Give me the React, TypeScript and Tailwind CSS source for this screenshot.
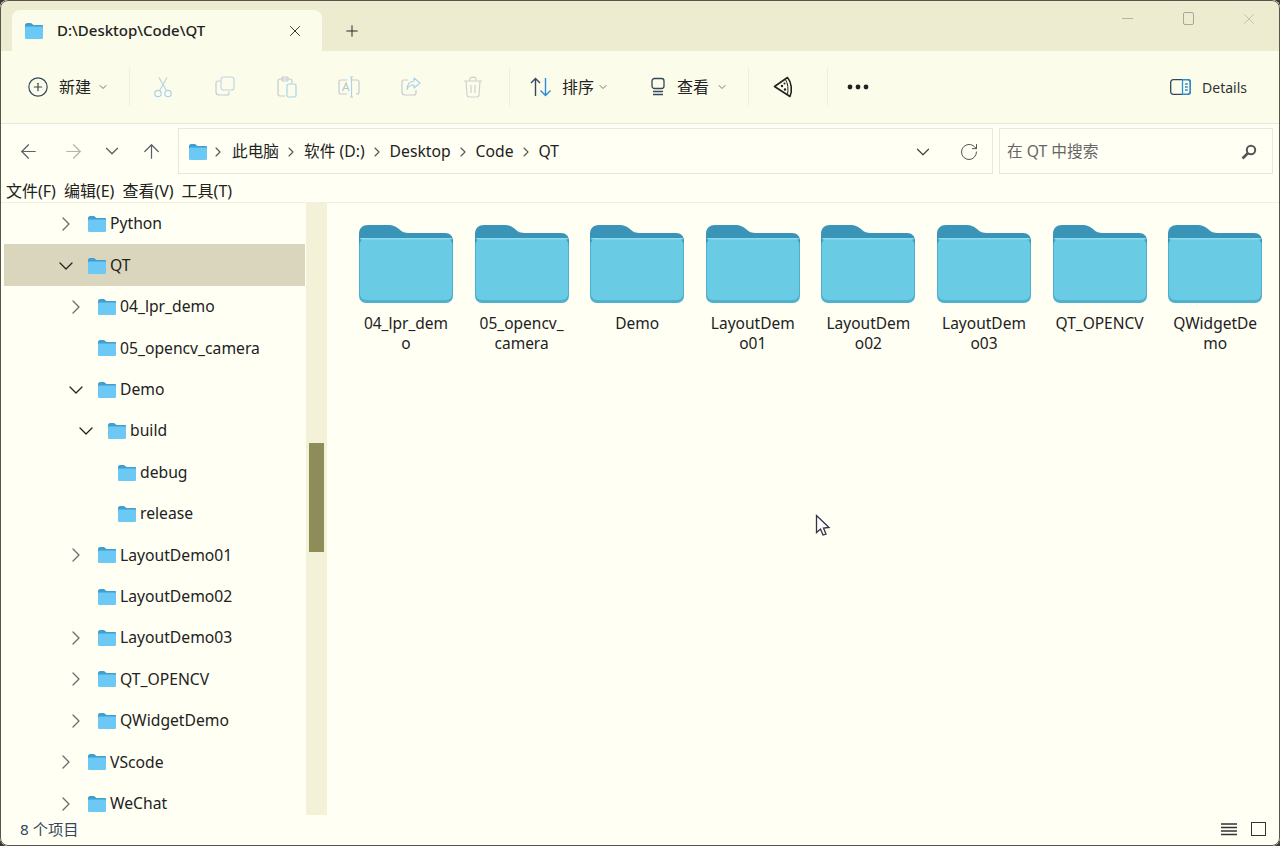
import React from "react";
import { ArrowLeft, ArrowRight, ArrowUp, ChevronDown, ChevronRight, Plus, PlusCircle, RotateCw, X } from "lucide-react";

const FONT = "font-['Noto_Sans','Noto_Sans_CJK_SC',sans-serif]";

// small folder icon used in tab, address bar and tree
const SmallFolder = ({ className = "" }: { className?: string }) => (
  <svg viewBox="0 0 20 18" className={className}>
    <path d="M1 3C1 2 2 1 3 1h4l2.500 2H18c.6 0 1 .4 1 1v3H1z" fill="#3f9fd0" />
    <rect x="1" y="4.500" width="18" height="12.500" rx="1.200" fill="#6cc8f5" />
  </svg>
);

const BigFolder = () => (
  <svg viewBox="0 0 94 78" className="w-[94px] h-[78px]">
    <path
      d="M0 9C0 3 4 0 9 0h20c5 0 7 1 11 4 3 3 6 4 10 4h36c5 0 8 3 8 8v14H0z"
      fill="#3a94b8"
    />
    <rect x="0" y="13" width="94" height="65" rx="7" fill="#4fb0cc" />
    <rect x="1" y="13" width="92" height="62" rx="6" fill="#69cbe4" />
    <rect x="1" y="13" width="92" height="1.500" rx="0.700" fill="#8adcf0" />
  </svg>
);

const Sep = () => <div className="w-px h-[38px] bg-[#f1efdc] shrink-0" />;

const Dim = ({ children }: { children: React.ReactNode }) => (
  <div className="w-[62px] flex justify-center">{children}</div>
);

const DIM_GRAY = "#c5ccd2";
const DIM_BLUE = "#a8d2ee";

const CutIcon = () => (
  <svg viewBox="0 0 20 22" className="w-[20px] h-[22px]" fill="none" stroke={DIM_BLUE} strokeWidth="1.200">
    <circle cx="5" cy="17.500" r="3.200" />
    <circle cx="15" cy="17.500" r="3.200" />
    <path d="M6.500 14.700 14 1.500M13.500 14.700 6 1.500" stroke="#bcd2e2" />
  </svg>
);

const CopyIcon = () => (
  <svg viewBox="0 0 20 20" className="w-[20px] h-[20px]" fill="none" strokeWidth="1.200">
    <path d="M5 5H3c-1.300 0-2 .8-2 2v9c0 1.700 1 3 3 3h8c1.300 0 2-.8 2-2v-1.500" stroke={DIM_GRAY} />
    <rect x="6" y="1" width="13" height="13" rx="2.500" stroke="#bcd6ea" />
  </svg>
);

const PasteIcon = () => (
  <svg viewBox="0 0 20 22" className="w-[20px] h-[22px]" fill="none" strokeWidth="1.200">
    <path d="M8 20H3c-1.200 0-2-.8-2-2V5c0-1.200.8-2 2-2h10c1.200 0 2 .8 2 2v2" stroke={DIM_GRAY} />
    <rect x="5" y="1" width="6" height="4" rx="1" stroke={DIM_GRAY} />
    <rect x="10" y="8" width="9" height="13" rx="1.500" stroke={DIM_BLUE} />
  </svg>
);

const RenameIcon = () => (
  <svg viewBox="0 0 22 22" className="w-[22px] h-[22px]" fill="none" strokeWidth="1.200">
    <path d="M13 4h6c1.300 0 2 .8 2 2v10c0 1.300-.7 2-2 2h-1M9 18H3c-1.300 0-2-.7-2-2V6c0-1.300.7-2 2-2h6" stroke={DIM_GRAY} />
    <path d="M4.500 15 8 7l3 8M5.500 12.500h5" stroke="#b4c7d6" />
    <path d="M12 1h3M12 21h3M13.500 1v20" stroke={DIM_BLUE} />
  </svg>
);

const ShareIcon = () => (
  <svg viewBox="0 0 20 20" className="w-[20px] h-[20px]" fill="none" strokeWidth="1.200">
    <path d="M7 4H3C1.800 4 1 4.800 1 6v10c0 1.600 1 3 3 3h9c1.300 0 2-.8 2-2v-3" stroke={DIM_GRAY} />
    <path d="M13 2l6 5-6 5V9c-3.500 0-6 1.500-7 4.500C6 8.500 9 5.500 13 5z" stroke={DIM_BLUE} strokeLinejoin="round" />
  </svg>
);

const TrashIcon = () => (
  <svg viewBox="0 0 20 22" className="w-[20px] h-[22px]" fill="none" stroke="#cfd0ce" strokeWidth="1.200">
    <path d="M1 5h18M7 5V3c0-1 .6-1.700 1.500-1.700h3c.9 0 1.500.7 1.500 1.700v2" />
    <path d="M3 5l1 14c.1 1 .8 2 2 2h8c1.200 0 1.900-1 2-2l1-14" />
    <path d="M8 9v8M12 9v8" />
  </svg>
);

const Toolbar = () => (
  <div className="h-[73px] flex items-center pl-[27px] pr-[33px] border-b border-[#e9e7d2] bg-[#fcfceb] text-[#222] shrink-0">
    <div className="flex items-center w-[102px] shrink-0">
      <PlusCircle size={22} strokeWidth={1.300} className="text-[#33485a]" />
      <span className="ml-[10px] text-[16px]">新建</span>
      <ChevronDown size={12} className="ml-[6px] text-[#777]" />
    </div>
    <Sep />
    <div className="flex w-[372px] ml-[2px] shrink-0">
      <Dim><CutIcon /></Dim>
      <Dim><CopyIcon /></Dim>
      <Dim><PasteIcon /></Dim>
      <Dim><RenameIcon /></Dim>
      <Dim><ShareIcon /></Dim>
      <Dim><TrashIcon /></Dim>
    </div>
    <div className="ml-[5px]"><Sep /></div>
    <div className="flex items-center w-[120px] ml-[20px] shrink-0">
      <svg viewBox="0 0 22 20" className="w-[22px] h-[20px]" fill="none" strokeWidth="1.400">
        <path d="M5.500 19V1.500M1 6l4.500-4.500L10 6" stroke="#33485a" />
        <path d="M15.500 1v17.500M10.500 13.500l5 5 5-5" stroke="#2a8fd8" />
      </svg>
      <span className="ml-[10px] text-[16px]">排序</span>
      <ChevronDown size={12} className="ml-[3px] text-[#777]" />
    </div>
    <div className="flex items-center w-[98px] shrink-0">
      <svg viewBox="0 0 16 20" className="w-[16px] h-[20px]" fill="none" stroke="#33485a" strokeWidth="1.300">
        <rect x="2" y="1.500" width="12" height="10" rx="2.500" />
        <path d="M3 14.500h10M3 17.500h10" />
      </svg>
      <span className="ml-[11px] text-[16px]">查看</span>
      <ChevronDown size={12} className="ml-[7px] text-[#777]" />
    </div>
    <Sep />
    <div className="w-[78px] pl-[24px] shrink-0">
      <svg viewBox="0 0 20 22" className="w-[20px] h-[22px]" fill="none" stroke="#222" strokeWidth="1.600">
        <path d="M1.500 10.500 14.500 1.500C18.500 6 19.500 15 17 20.500z" strokeLinejoin="round" />
        <path d="M12.500 3.500c2.500 4 3 10 2 15" strokeWidth="1" />
        <circle cx="9" cy="10" r="1.200" fill="#222" stroke="none" />
        <circle cx="12" cy="13.500" r="1.200" fill="#222" stroke="none" />
        <circle cx="11.500" cy="7.500" r="1" fill="#222" stroke="none" />
      </svg>
    </div>
    <Sep />
    <svg viewBox="0 0 22 6" className="ml-[19px] w-[22px] h-[6px]" fill="#222">
      <circle cx="3" cy="3" r="2.400" />
      <circle cx="11" cy="3" r="2.400" />
      <circle cx="19" cy="3" r="2.400" />
    </svg>
    <div className="ml-auto flex items-center">
      <svg viewBox="0 0 21 16" className="w-[21px] h-[16px]" fill="none" strokeWidth="1.300">
        <rect x="0.700" y="0.700" width="19.600" height="14.600" rx="2.500" stroke="#33485a" />
        <path d="M12.500 .7h5.300c1.500 0 2.500 1 2.500 2.500v9.600c0 1.500-1 2.500-2.500 2.500h-5.300z" stroke="#2a8fd8" />
        <path d="M15 5h2.800M15 8h2.800M15 11h2.800" stroke="#2a8fd8" />
      </svg>
      <span className="ml-[11px] text-[14px] text-[#333]">Details</span>
    </div>
  </div>
);

const Crumb = ({ label }: { label: string }) => (
  <>
    <ChevronRight size={16} strokeWidth={1.600} className="ml-[4px] text-[#555]" />
    <span className="ml-[5px]">{label}</span>
  </>
);

const AddressBar = () => (
  <div className="h-[54px] flex items-center text-[#222] shrink-0">
    <div className="w-[178px] flex items-center pl-[17px] text-[#5c6165] shrink-0">
      <ArrowLeft size={23} strokeWidth={1.300} />
      <ArrowRight size={23} strokeWidth={1.300} className="ml-[22px] text-[#b4b6ae]" />
      <ChevronDown size={22} strokeWidth={1.400} className="ml-[16px]" />
      <ArrowUp size={23} strokeWidth={1.300} className="ml-[17px]" />
    </div>
    <div className="w-[815px] h-[46px] pt-[1px] border border-[#e9e8dc] flex items-center pl-[9px] text-[15.700px] shrink-0">
      <SmallFolder className="w-[20px] h-[18px]" />
      <ChevronRight size={16} strokeWidth={1.600} className="ml-[2px] text-[#555]" />
      <span className="ml-[6px]">此电脑</span>
      <Crumb label="软件 (D:)" />
      <Crumb label="Desktop" />
      <Crumb label="Code" />
      <Crumb label="QT" />
      <ChevronDown size={22} strokeWidth={1.300} className="ml-auto mr-[25px] text-[#444]" />
      <RotateCw size={20} strokeWidth={1.200} className="mr-[13px] text-[#555]" />
    </div>
    <div className="ml-[6px] w-[274px] h-[46px] pt-[1px] border border-[#e9e8dc] flex items-center pl-[7px] pr-[15px] text-[15.700px] text-[#666] shrink-0">
      <span>在 QT 中搜索</span>
      <svg viewBox="0 0 16 16" className="ml-auto w-[16px] h-[16px]" fill="none" stroke="#555">
        <circle cx="10" cy="6" r="4.200" strokeWidth="2" />
        <path d="M7 9 1.500 14.500" strokeWidth="2.600" />
      </svg>
    </div>
  </div>
);

type Node = { label: string; depth: number; arrow?: "right" | "down"; selected?: boolean };

const TREE: Node[] = [
  { label: "Python", depth: 0, arrow: "right" },
  { label: "QT", depth: 0, arrow: "down", selected: true },
  { label: "04_lpr_demo", depth: 1, arrow: "right" },
  { label: "05_opencv_camera", depth: 1 },
  { label: "Demo", depth: 1, arrow: "down" },
  { label: "build", depth: 2, arrow: "down" },
  { label: "debug", depth: 3 },
  { label: "release", depth: 3 },
  { label: "LayoutDemo01", depth: 1, arrow: "right" },
  { label: "LayoutDemo02", depth: 1 },
  { label: "LayoutDemo03", depth: 1, arrow: "right" },
  { label: "QT_OPENCV", depth: 1, arrow: "right" },
  { label: "QWidgetDemo", depth: 1, arrow: "right" },
  { label: "VScode", depth: 0, arrow: "right" },
  { label: "WeChat", depth: 0, arrow: "right" },
];

const INDENT = ["pl-[55px]", "pl-[65px]", "pl-[75px]", "pl-[85px]"];

const TreeRow = ({ node }: { node: Node }) => (
  <div
    className={`h-[41.400px] flex items-center shrink-0 pt-[1px] ${INDENT[node.depth]} ${
      node.selected ? "bg-[#dad6bd]" : ""
    }`}
  >
    <div className="w-[13px] flex justify-center">
      {node.arrow === "right" && <ChevronRight size={24} strokeWidth={1.300} className="shrink-0 text-[#6c6c6c]" />}
      {node.arrow === "down" && <ChevronDown size={24} strokeWidth={1.300} className="shrink-0 text-[#222]" />}
    </div>
    <SmallFolder className="ml-[15px] w-[20px] h-[18px]" />
    <span className="ml-[3px] text-[15.700px] text-[#222]">{node.label}</span>
  </div>
);

const Sidebar = () => (
  <div className="w-[329px] flex shrink-0 min-h-0">
    <div className="w-[301px] ml-[4px] flex flex-col overflow-hidden">
      {TREE.map((n) => (
        <TreeRow key={n.label} node={n} />
      ))}
    </div>
    <div className="w-[21px] ml-[1px] bg-[#f3f1d8] pt-[240px] px-[3px]">
      <div className="w-full h-[109px] bg-[#8e8c59]" />
    </div>
  </div>
);

const ITEMS = [
  ["04_lpr_dem", "o"],
  ["05_opencv_", "camera"],
  ["Demo"],
  ["LayoutDem", "o01"],
  ["LayoutDem", "o02"],
  ["LayoutDem", "o03"],
  ["QT_OPENCV"],
  ["QWidgetDe", "mo"],
];

const FileGrid = () => (
  <div className="flex-1 flex pt-[22px] pl-[19px] relative overflow-hidden">
    {ITEMS.map((lines, i) => (
      <div key={i} className="w-[115.600px] shrink-0 flex flex-col items-center">
        <div className="self-start ml-[11px]">
          <BigFolder />
        </div>
        <div className="mt-[10px] self-start w-[116px] text-center text-[15.500px] leading-[20px] text-[#222]">
          {lines.map((l) => (
            <div key={l}>{l}</div>
          ))}
        </div>
      </div>
    ))}
    {/* mouse pointer */}
    <svg viewBox="0 0 16 24" className="absolute left-[486px] top-[311px] w-[16px] h-[24px]">
      <path
        d="M1.500 1.500v17l4-3.500 2.500 6 3-1-2.500-6 5.500-.500z"
        fill="#fff"
        stroke="#334"
        strokeWidth="1.300"
      />
    </svg>
  </div>
);

export default function App() {
  return (
    <div className={`w-[1280px] h-[846px] overflow-hidden bg-[#3a3a34] ${FONT}`}>
      <div className="w-full h-full rounded-[8px] overflow-hidden bg-[#fffff4] flex flex-col relative">
        {/* title bar with tab */}
        <div className="h-[51px] bg-[#eeecd0] flex items-end pl-[12px] shrink-0">
          <div className="w-[310px] h-[41px] bg-[#fcfceb] rounded-t-[8px] flex items-center pl-[12px] pr-[18px]">
            <SmallFolder className="w-[20px] h-[18px]" />
            <span className="ml-[13px] text-[15px] font-medium text-[#222]">D:\Desktop\Code\QT</span>
            <X size={18} strokeWidth={1.200} className="ml-auto text-[#222]" />
          </div>
          <Plus size={18} strokeWidth={1.300} className="ml-[21px] mb-[11px] text-[#222]" />
          <div className="ml-auto h-full flex items-start pt-[12px] pr-[22px]">
            <div className="w-[11px] h-px bg-[#b5b4a0] mt-[6px]" />
            <div className="ml-[50px] w-[11px] h-[13px] rounded-[2px] border border-[#a9a894]" />
            <X size={18} strokeWidth={1} className="ml-[46px] -mt-[2px] text-[#b5b4a0]" />
          </div>
        </div>
        <Toolbar />
        <AddressBar />
        {/* menu bar */}
        <div className="h-[24px] flex items-center pt-[2px] pl-[6px] gap-[8px] text-[16px] text-[#222] shrink-0">
          <span>文件(F)</span>
          <span>编辑(E)</span>
          <span>查看(V)</span>
          <span>工具(T)</span>
        </div>
        <div className="flex-1 flex min-h-0 border-t border-[#f2f1de]">
          <Sidebar />
          <FileGrid />
        </div>
        {/* status bar */}
        <div className="h-[31px] shrink-0 flex items-center pb-[3px] pl-[20px] pr-[14px] text-[15.300px] text-[#33485a]">
          <span>8 个项目</span>
          <div className="ml-auto flex items-center gap-[14px]">
            <svg viewBox="0 0 16 14" className="w-[16px] h-[14px]" stroke="#333" strokeWidth="1.300">
              <path d="M0 2h16M0 5.500h16M0 9h16M0 12.500h16" />
            </svg>
            <div className="w-[15px] h-[14px] border-[1.500px] border-[#333]" />
          </div>
        </div>
        {/* thin dark window edge */}
        <div className="absolute inset-0 rounded-[8px] border border-[#55554a] pointer-events-none" />
      </div>
    </div>
  );
}
